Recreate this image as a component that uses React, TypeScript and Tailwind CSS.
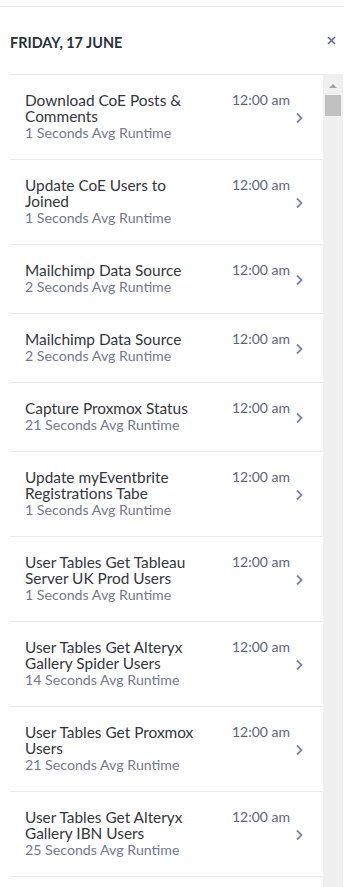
import React from 'react';

const JOBS = [
  { title: 'Download CoE Posts & Comments', runtime: '1 Seconds Avg Runtime' },
  { title: 'Update CoE Users to Joined', runtime: '1 Seconds Avg Runtime' },
  { title: 'Mailchimp Data Source', runtime: '2 Seconds Avg Runtime' },
  { title: 'Mailchimp Data Source', runtime: '2 Seconds Avg Runtime' },
  { title: 'Capture Proxmox Status', runtime: '21 Seconds Avg Runtime' },
  { title: 'Update myEventbrite Registrations Tabe', runtime: '1 Seconds Avg Runtime' },
  { title: 'User Tables Get Tableau Server UK Prod Users', runtime: '1 Seconds Avg Runtime' },
  { title: 'User Tables Get Alteryx Gallery Spider Users', runtime: '14 Seconds Avg Runtime' },
  { title: 'User Tables Get Proxmox Users', runtime: '21 Seconds Avg Runtime' },
  { title: 'User Tables Get Alteryx Gallery IBN Users', runtime: '25 Seconds Avg Runtime' },
];

function Chevron() {
  return (
    <svg width="8" height="12" viewBox="0 0 8 12" fill="none" stroke="#7b87a6" strokeWidth="1.8">
      <path d="M2 1.5l4.5 4.5L2 10.5" />
    </svg>
  );
}

export default function App() {
  return (
    <div className="w-[350px] h-[887px] overflow-hidden bg-white font-['Lato','Liberation_Sans',sans-serif] flex flex-col">
      <div className="mt-[6px] mr-[6px] border-t border-[#e9eaf0]" />

      {/* Header */}
      <div className="flex items-start justify-between pl-[10px] pr-[14px] pt-[28px] h-[67px]">
        <h2 className="text-[14.4px] leading-[16px] font-bold uppercase text-[#2b2f38]">
          Friday, 17 June
        </h2>
        <svg width="9" height="9" viewBox="0 0 9 9" stroke="#5f6b85" strokeWidth="1.6" className="mt-[1px]">
          <path d="M1 1l7 7M8 1L1 8" />
        </svg>
      </div>

      {/* List + scrollbar */}
      <div className="flex flex-1 min-h-0">
        <div className="ml-[10px] w-[313px] border-t border-[#e9eaf0]">
          {JOBS.map((job, i) => (
            <div key={i} className="flex items-center border-b border-[#e9eaf0] pl-[15px] pr-[20px]">
              <div className="flex-1 flex pt-[17px] pb-[17px]">
                <div className="w-[180px]">
                  <div className="text-[15.4px] leading-[16px] text-[#33363d]">{job.title}</div>
                  <div className="text-[14.2px] leading-[18px] text-[#737a8c]">{job.runtime}</div>
                </div>
                <div className="ml-auto text-[14px] leading-[16px] text-[#5d6579]">12:00 am</div>
              </div>
              <div className="ml-[5px] mt-[2px]">
                <Chevron />
              </div>
            </div>
          ))}
        </div>

        <div className="w-[20px] bg-[#f0f0f0] flex flex-col items-center pt-[10px]">
          <div className="w-0 h-0 border-l-[4px] border-r-[4px] border-b-[4px] border-l-transparent border-r-transparent border-b-[#a3a3a3]" />
          <div className="mt-[7px] w-[16px] h-[21px] bg-[#c1c1c1]" />
        </div>
      </div>
    </div>
  );
}
